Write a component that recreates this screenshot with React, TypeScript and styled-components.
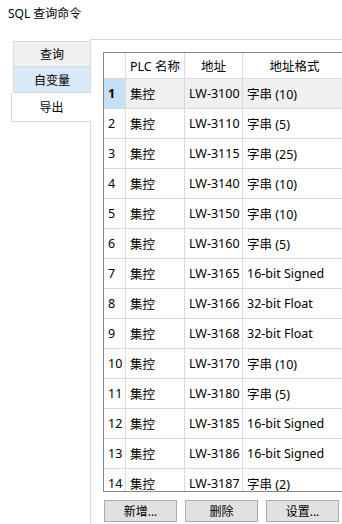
import styled, { createGlobalStyle } from "styled-components";

const GlobalStyle = createGlobalStyle`
  html, body {
    margin: 0;
    padding: 0;
    background: #ffffff;
  }
  body {
    font-family: "Noto Sans", "Noto Sans CJK SC", sans-serif;
    font-size: 12.5px;
    color: #000000;
  }
`;

type Row = { id: number; name: string; addr: string; format: string };

const rows: Row[] = [
  { id: 1, name: "集控", addr: "LW-3100", format: "字串 (10)" },
  { id: 2, name: "集控", addr: "LW-3110", format: "字串 (5)" },
  { id: 3, name: "集控", addr: "LW-3115", format: "字串 (25)" },
  { id: 4, name: "集控", addr: "LW-3140", format: "字串 (10)" },
  { id: 5, name: "集控", addr: "LW-3150", format: "字串 (10)" },
  { id: 6, name: "集控", addr: "LW-3160", format: "字串 (5)" },
  { id: 7, name: "集控", addr: "LW-3165", format: "16-bit Signed" },
  { id: 8, name: "集控", addr: "LW-3166", format: "32-bit Float" },
  { id: 9, name: "集控", addr: "LW-3168", format: "32-bit Float" },
  { id: 10, name: "集控", addr: "LW-3170", format: "字串 (10)" },
  { id: 11, name: "集控", addr: "LW-3180", format: "字串 (5)" },
  { id: 12, name: "集控", addr: "LW-3185", format: "16-bit Signed" },
  { id: 13, name: "集控", addr: "LW-3186", format: "16-bit Signed" },
  { id: 14, name: "集控", addr: "LW-3187", format: "字串 (2)" },
];

const Window = styled.div`
  width: 342px;
  height: 524px;
  overflow: hidden;
`;

const Title = styled.div`
  height: 39px;
  padding: 6px 0 0 8px;
  box-sizing: border-box;
  line-height: 16px;
  font-size: 12px;
`;

const Body = styled.div`
  display: flex;
  align-items: flex-start;
  padding-left: 11px;
`;

const TabColumn = styled.div`
  flex: none;
  width: 80px;
  margin-top: 2px;
  margin-right: -1px;
  display: flex;
  flex-direction: column;
  position: relative;
  z-index: 1;
  font-size: 12px;
`;

const Tab = styled.div<{ $active?: boolean; $hover?: boolean }>`
  box-sizing: border-box;
  display: flex;
  align-items: center;
  justify-content: center;
  height: ${(p) => (p.$active ? "29px" : "26px")};
  margin-left: ${(p) => (p.$active ? "0" : "2px")};
  border: 1px solid #d9d9d9;
  border-right: ${(p) => (p.$active ? "none" : "1px solid #d9d9d9")};
  background: ${(p) => (p.$active ? "#ffffff" : p.$hover ? "#d9e9f8" : "#f0f0f0")};
  & + & {
    border-top: none;
  }
`;

const Panel = styled.div`
  flex: none;
  width: 300px;
  height: 520px;
  border: 1px solid #d9d9d9;
  background: #ffffff;
  padding: 12px 0 0 12px;
  box-sizing: border-box;
`;

const Grid = styled.div`
  width: 320px;
  height: 440px;
  border: 1px solid #828790;
  box-sizing: border-box;
  overflow: hidden;
  background: #ffffff;
`;

const cols = [21, 58, 57, 103, 60];

const GridRow = styled.div<{ $header?: boolean }>`
  display: flex;
  height: ${(p) => (p.$header ? "26px" : "30px")};
  border-bottom: 1px solid #dadada;
  box-sizing: border-box;
`;

const Cell = styled.div<{ $w: number; $center?: boolean; $bg?: string; $bold?: boolean }>`
  width: ${(p) => (p.$center ? p.$w : p.$w - 4)}px;
  flex: none;
  box-sizing: content-box;
  border-right: 1px solid #dadada;
  display: flex;
  align-items: center;
  justify-content: ${(p) => (p.$center ? "center" : "flex-start")};
  padding-left: ${(p) => (p.$center ? "0" : "4px")};
  background: ${(p) => p.$bg ?? "transparent"};
  font-weight: ${(p) => (p.$bold ? 700 : 400)};
  white-space: nowrap;
  overflow: hidden;
`;

const ButtonBar = styled.div`
  display: flex;
  gap: 8px;
  margin: 8px 0 0 1px;
`;

const Button = styled.button`
  flex: none;
  width: 73px;
  height: 22px;
  box-sizing: border-box;
  border: 1px solid #adadad;
  background: #e1e1e1;
  font-family: inherit;
  font-size: 12px;
  color: #000000;
  padding: 0;
  border-radius: 0;
`;

export default function App() {
  return (
    <Window>
      <GlobalStyle />
      <Title>SQL 查询命令</Title>
      <Body>
        <TabColumn>
          <Tab>查询</Tab>
          <Tab $hover>自变量</Tab>
          <Tab $active>导出</Tab>
        </TabColumn>
        <Panel>
          <Grid>
            <GridRow $header>
              <Cell $w={cols[0]} $center />
              <Cell $w={cols[1]} $center>PLC 名称</Cell>
              <Cell $w={cols[2]} $center>地址</Cell>
              <Cell $w={cols[3]} $center>地址格式</Cell>
              <Cell $w={cols[4]} $center />
            </GridRow>
            {rows.map((r) => {
              const selected = r.id === 1;
              const bg = selected ? "#f0f0f0" : undefined;
              return (
                <GridRow key={r.id}>
                  <Cell $w={cols[0]} $bg={selected ? "#c5dff5" : undefined} $bold={selected}>
                    {r.id}
                  </Cell>
                  <Cell $w={cols[1]} $bg={bg}>{r.name}</Cell>
                  <Cell $w={cols[2]} $bg={bg}>{r.addr}</Cell>
                  <Cell $w={cols[3]} $bg={bg}>{r.format}</Cell>
                  <Cell $w={cols[4]} $bg={bg} />
                </GridRow>
              );
            })}
          </Grid>
          <ButtonBar>
            <Button>新增...</Button>
            <Button>删除</Button>
            <Button>设置...</Button>
          </ButtonBar>
        </Panel>
      </Body>
    </Window>
  );
}
